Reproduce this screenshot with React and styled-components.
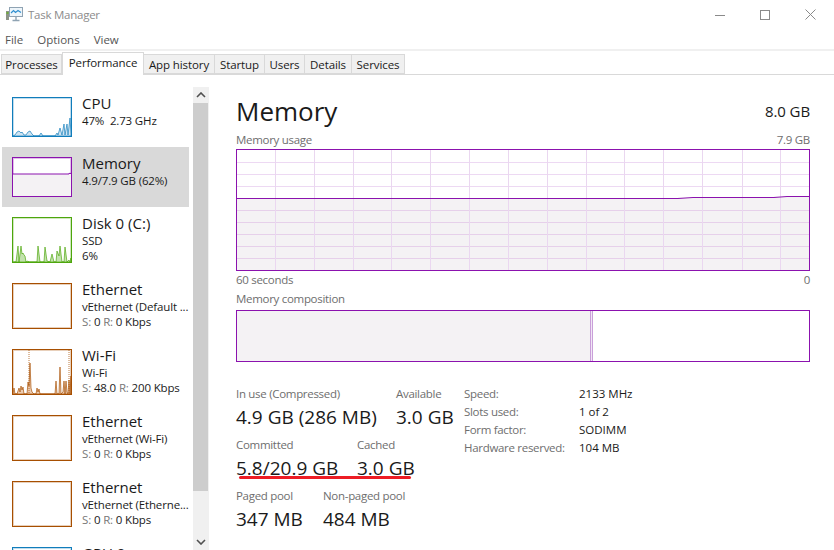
import React from 'react'
import styled, { createGlobalStyle } from 'styled-components'

const FONT = `"Open Sans", "Noto Sans", sans-serif`
const PURPLE = '#8b12ae'

const GlobalStyle = createGlobalStyle`
  html, body {
    margin: 0;
    padding: 0;
    background: #fff;
    overflow: hidden;
  }
  body {
    font-family: ${FONT};
    color: #1a1a1a;
  }
`

const TABS = ['Processes', 'Performance', 'App history', 'Startup', 'Users', 'Details', 'Services']
const TAB_WIDTHS = [61, 82, 71, 50, 40, 47, 53]

const CPU_LINE = [[0,38],[2,37],[4,34],[6,33],[8,35],[9,34],[11,37],[13,37],[15,34],[17,33],[19,36],[21,38],[26,38],[28,35],[30,38],[42,38],[44,35],[45,37],[47,30],[49,37],[51,26],[52,37],[54,26],[55,37],[57,20],[58,36]]
const DISK_LINE = [[0,44],[3,44],[5,28],[6,44],[8,28],[9,36],[10,35],[11,37],[12,38],[13,44],[15,43],[16,44],[24,44],[25,28],[27,44],[31,44],[32,29],[34,43],[37,44],[39,36],[41,44],[43,44],[44,33],[46,38],[47,28],[49,44],[51,44],[52,29],[54,44],[56,42],[57,44],[58,40]]
const WIFI_LINE = [[0,44],[1,38],[2,44],[4,44],[6,38],[7,42],[8,36],[9,40],[10,37],[11,44],[14,44],[15,32],[16,36],[17,13],[18,38],[19,42],[21,44],[23,44],[24,38],[25,42],[26,39],[27,44],[42,44],[43,31],[44,44],[46,44],[47,17],[48,44],[50,42],[51,31],[52,44],[53,31],[54,42],[55,44],[56,30],[57,44],[58,26]]
const WIFI_DOTS = [[16,0,16,44],[56,0,56,44]]

const H_LINES = [162, 174, 186, 210, 222, 234, 246, 258].map((y) => y - 149)
const V_LINES = [275, 314, 353, 391, 430, 469, 508, 547, 586, 624, 663, 702, 742, 780].map((x) => x - 236)

const ROWS = [
  { id: 'cpu', name: 'CPU', lines: ['47%  2.73 GHz'], color: '#117dbb', fill: '#cfe4f2', h: 40, points: CPU_LINE },
  { id: 'mem', name: 'Memory', lines: ['4.9/7.9 GB (62%)'], color: PURPLE, h: 40, selected: true, level: 16 },
  { id: 'disk', name: 'Disk 0 (C:)', lines: ['SSD', '6%'], color: '#4da60c', fill: '#c3e2ae', h: 46, points: DISK_LINE },
  { id: 'eth1', name: 'Ethernet', lines: ['vEthernet (Default ...'], rate: ['0', '0 Kbps'], color: '#a74f01', h: 46 },
  { id: 'wifi', name: 'Wi-Fi', lines: ['Wi-Fi'], rate: ['48.0', '200 Kbps'], color: '#a74f01', fill: '#eccbb0', h: 46, points: WIFI_LINE, dots: WIFI_DOTS },
  { id: 'eth2', name: 'Ethernet', lines: ['vEthernet (Wi-Fi)'], rate: ['0', '0 Kbps'], color: '#a74f01', h: 46 },
  { id: 'eth3', name: 'Ethernet', lines: ['vEthernet (Etherne...'], rate: ['0', '0 Kbps'], color: '#a74f01', h: 46 },
  { id: 'gpu', name: 'GPU 0', lines: ['Intel(R) UHD Graphics'], color: '#117dbb', h: 46 },
]

const SPECS = [
  ['Speed:', '2133 MHz'],
  ['Slots used:', '1 of 2'],
  ['Form factor:', 'SODIMM'],
  ['Hardware reserved:', '104 MB'],
]

const Sparkline = ({ row }) => {
  const { h, color, fill, points, dots, level } = row
  const area = points && `0,${h - 2} ${points.map((p) => p.join(',')).join(' ')} 58,${h - 2}`
  return (
    <Thumb $color={color} $height={h}>
      <svg width="58" height={h - 2} viewBox={`0 0 58 ${h - 2}`}>
        {level && <rect x="0" y={level} width="58" height={h - 2 - level} fill="#f4f2f4" />}
        {level && <path d={`M0 ${level}H56V${level - 0.6}H58`} fill="none" stroke={color} strokeWidth="1" />}
        {points && <polygon points={area} fill={fill} stroke={color} strokeWidth="0.8" strokeOpacity="0.85" />}
        {dots && dots.map((d) => (
          <line key={d[0]} x1={d[0]} y1={d[1]} x2={d[2]} y2={d[3]} stroke={color} strokeOpacity="0.75" strokeWidth="1" strokeDasharray="1 1" />
        ))}
      </svg>
    </Thumb>
  )
}

const SideRow = ({ row }) => (
  <RowBox $selected={row.selected}>
    <Sparkline row={row} />
    <RowText>
      <RowName>{row.name}</RowName>
      {row.lines.map((l) => <RowLine key={l}>{l}</RowLine>)}
      {row.rate && (
        <RowLine>
          <Dim>S:</Dim> {row.rate[0]} <Dim>R:</Dim> {row.rate[1]}
        </RowLine>
      )}
    </RowText>
  </RowBox>
)

const UsageChart = () => (
  <ChartFrame>
    <svg width="572" height="120" viewBox="0 0 572 120">
      <path d="M0 48.5H441V47.5H537V46.5H572V120H0Z" fill="#f4f2f4" />
      {H_LINES.map((y) => <rect key={y} x="0" y={y - 1} width="572" height="1" fill={y > 48 ? '#e6d0ea' : '#edd9f3'} />)}
      {V_LINES.map((x) => <rect key={x} x={x - 1} y="0" width="1" height="120" fill="#ead7f0" />)}
      <path d="M0 48.5H441L456 47.5H537L550 46.5H572" fill="none" stroke={PURPLE} strokeWidth="1" />
    </svg>
  </ChartFrame>
)

const AppIcon = () => (
  <svg width="18" height="15" viewBox="0 0 18 15">
    <rect x="1" y="4" width="3" height="9" fill="#8d9488" />
    <rect x="1.5" y="5" width="2" height="2" fill="#6fae3a" />
    <rect x="4.5" y="0.5" width="13" height="9" fill="#eef5fa" stroke="#8fa3b3" />
    <path d="M6 6l2.5-2.5 2 2 2.5-2 3 2" fill="none" stroke="#2f8fd0" strokeWidth="1.2" />
    <path d="M7.5 13.5h7M11 10v3" stroke="#8fa3b3" strokeWidth="1.4" />
  </svg>
)

const WindowControls = () => (
  <Controls>
    <svg width="10" height="10" viewBox="0 0 10 10"><path d="M0 5.5H10" stroke="#8a8a8a" /></svg>
    <svg width="10" height="10" viewBox="0 0 10 10"><rect x="0.5" y="0.5" width="9" height="9" fill="none" stroke="#8a8a8a" /></svg>
    <svg width="11" height="11" viewBox="0 0 11 11"><path d="M0.5 0.5L10.5 10.5M10.5 0.5L0.5 10.5" stroke="#8a8a8a" /></svg>
  </Controls>
)

const Stat = ({ label, value, width }) => (
  <StatBox $width={width}>
    <Caption>{label}</Caption>
    <StatValue>{value}</StatValue>
  </StatBox>
)

export default function App() {
  return (
    <Page>
      <GlobalStyle />
      <TitleBar>
        <AppIcon />
        <WindowTitle>Task Manager</WindowTitle>
        <WindowControls />
      </TitleBar>
      <MenuBar>
        <MenuItem>File</MenuItem>
        <MenuItem>Options</MenuItem>
        <MenuItem>View</MenuItem>
      </MenuBar>
      <TabStrip>
        {TABS.map((t, i) => (
          <Tab key={t} $width={TAB_WIDTHS[i]} $active={t === 'Performance'}>{t}</Tab>
        ))}
      </TabStrip>
      <Body>
        <Sidebar>
          <RowList>
            {ROWS.map((r) => <SideRow key={r.id} row={r} />)}
          </RowList>
          <ScrollBar>
            <ScrollButton>
              <svg width="10" height="6" viewBox="0 0 10 6"><path d="M1 5l4-4 4 4" fill="none" stroke="#505050" strokeWidth="1.6" /></svg>
            </ScrollButton>
            <ScrollThumb />
            <ScrollRest>
              <svg width="10" height="6" viewBox="0 0 10 6"><path d="M1 1l4 4 4-4" fill="none" stroke="#505050" strokeWidth="1.6" /></svg>
            </ScrollRest>
          </ScrollBar>
        </Sidebar>
        <Main>
          <HeadRow>
            <Heading>Memory</Heading>
            <Total>8.0 GB</Total>
          </HeadRow>
          <LabelRow>
            <Caption>Memory usage</Caption>
            <Caption>7.9 GB</Caption>
          </LabelRow>
          <UsageChart />
          <LabelRow>
            <Caption>60 seconds</Caption>
            <Caption>0</Caption>
          </LabelRow>
          <CompositionLabel>Memory composition</CompositionLabel>
          <CompositionBar>
            <InUse />
            <Modified />
          </CompositionBar>
          <Stats>
            <StatColumn>
              <StatRow>
                <Stat label="In use (Compressed)" value="4.9 GB (286 MB)" width={160} />
                <Stat label="Available" value="3.0 GB" />
              </StatRow>
              <StatRow>
                <Stat label="Committed" value="5.8/20.9 GB" width={121} />
                <Stat label="Cached" value="3.0 GB" />
                <RedMark />
              </StatRow>
              <StatRow>
                <Stat label="Paged pool" value="347 MB" width={87} />
                <Stat label="Non-paged pool" value="484 MB" />
              </StatRow>
            </StatColumn>
            <SpecGrid>
              {SPECS.map(([k, v]) => (
                <React.Fragment key={k}>
                  <Caption>{k}</Caption>
                  <SpecValue>{v}</SpecValue>
                </React.Fragment>
              ))}
            </SpecGrid>
          </Stats>
        </Main>
      </Body>
    </Page>
  )
}

const Page = styled.div`
  width: 834px;
  height: 550px;
  overflow: hidden;
  display: flex;
  flex-direction: column;
  background: #fff;
`

const TitleBar = styled.div`
  height: 29px;
  padding-bottom: 1px;
  display: flex;
  align-items: center;
  padding-left: 5px;
  flex: none;
`

const WindowTitle = styled.span`
  margin-left: 5px;
  font-size: 11.5px;
  letter-spacing: -0.25px;
  color: #8c8c8c;
`

const Controls = styled.div`
  margin-left: auto;
  margin-right: 18px;
  display: flex;
  align-items: center;
  gap: 35px;
`

const MenuBar = styled.div`
  height: 19px;
  flex: none;
  display: flex;
  align-items: center;
  gap: 14px;
  padding-left: 5px;
  border-bottom: 2px solid #f0f0f0;
`

const MenuItem = styled.span`
  font-size: 11.5px;
  color: #555;
`

const TabStrip = styled.div`
  height: 23px;
  flex: none;
  display: flex;
  align-items: flex-end;
  padding-left: 1px;
  border-bottom: 1px solid #d9d9d9;
`

const Tab = styled.div`
  width: ${(p) => p.$width}px;
  box-sizing: border-box;
  height: ${(p) => (p.$active ? 23 : 20)}px;
  margin-bottom: ${(p) => (p.$active ? -1 : 0)}px;
  display: flex;
  align-items: center;
  justify-content: center;
  font-size: 11.5px;
  letter-spacing: -0.1px;
  white-space: nowrap;
  color: #1a1a1a;
  background: ${(p) => (p.$active ? '#fff' : '#f0f0f0')};
  border: 1px solid #d9d9d9;
  border-left-width: ${(p) => (p.$active ? 1 : 0)}px;
  border-bottom-width: ${(p) => (p.$active ? 0 : 1)}px;
  padding-bottom: ${(p) => (p.$active ? 3 : 0)}px;
  &:first-child {
    border-left-width: 1px;
  }
`

const Body = styled.div`
  flex: 1;
  min-height: 0;
  display: flex;
`

const Sidebar = styled.div`
  width: 209px;
  flex: none;
  display: flex;
  padding-top: 12px;
  box-sizing: border-box;
`

const RowList = styled.div`
  width: 193px;
  flex: none;
  overflow: hidden;
`

const RowBox = styled.div`
  width: 187px;
  margin-left: 2px;
  box-sizing: border-box;
  padding: 10px 0 10px 10px;
  display: flex;
  gap: 10px;
  overflow: hidden;
  white-space: nowrap;
  background: ${(p) => (p.$selected ? '#d9d9d9' : 'transparent')};
`

const Thumb = styled.div`
  width: 60px;
  height: ${(p) => p.$height}px;
  flex: none;
  box-sizing: border-box;
  border: 1px solid ${(p) => p.$color};
  box-shadow: inset 0 0 0 1px ${(p) => p.$color}44;
  background: #fff;
  svg {
    display: block;
  }
`

const RowText = styled.div`
  margin-top: -4px;
  min-width: 0;
`

const RowName = styled.div`
  font-size: 15px;
  line-height: 20px;
`

const RowLine = styled.div`
  font-size: 11.5px;
  letter-spacing: -0.15px;
  line-height: 15px;
  white-space: pre;
`

const Dim = styled.span`
  color: #777;
`

const ScrollBar = styled.div`
  width: 16px;
  flex: none;
  display: flex;
  flex-direction: column;
  background: #f0f0f0;
`

const ScrollButton = styled.div`
  height: 16px;
  flex: none;
  display: flex;
  align-items: center;
  justify-content: center;
`

const ScrollThumb = styled.div`
  height: 388px;
  flex: none;
  width: 15px;
  background: #cdcdcd;
`

const ScrollRest = styled.div`
  flex: 1;
  display: flex;
  align-items: flex-end;
  justify-content: center;
  padding-bottom: 5px;
`

const Main = styled.div`
  flex: 1;
  min-width: 0;
  display: flex;
  flex-direction: column;
  padding: 17px 24px 0 27px;
`

const HeadRow = styled.div`
  display: flex;
  align-items: center;
  justify-content: space-between;
  height: 38px;
  margin-bottom: 1px;
  flex: none;
`

const Heading = styled.div`
  font-size: 26px;
  line-height: 38px;
`

const Total = styled.div`
  font-size: 15px;
  letter-spacing: -0.1px;
`

const Caption = styled.div`
  font-size: 11.5px;
  letter-spacing: -0.3px;
  line-height: 14px;
  color: #6e6e6e;
  white-space: nowrap;
`

const LabelRow = styled.div`
  display: flex;
  justify-content: space-between;
  margin: 2px 0;
  flex: none;
`

const ChartFrame = styled.div`
  box-sizing: border-box;
  height: 122px;
  flex: none;
  border: 1px solid ${PURPLE};
  svg {
    display: block;
  }
`

const CompositionLabel = styled(Caption)`
  margin: 3px 0 4px;
  flex: none;
`

const CompositionBar = styled.div`
  box-sizing: border-box;
  height: 52px;
  flex: none;
  border: 1px solid ${PURPLE};
  display: flex;
`

const InUse = styled.div`
  width: 353px;
  background: #f4f2f4;
`

const Modified = styled.div`
  width: 3px;
  box-sizing: border-box;
  background: #f1e6f5;
  border-left: 1px solid #c99fd9;
  border-right: 1px solid #c99fd9;
`

const Stats = styled.div`
  display: flex;
  flex: none;
  margin-top: 25px;
`

const StatColumn = styled.div`
  width: 228px;
  flex: none;
  display: flex;
  flex-direction: column;
  gap: 9px;
`

const StatRow = styled.div`
  position: relative;
  display: flex;
`

const StatBox = styled.div`
  ${(p) => p.$width && `width: ${p.$width}px; flex: none;`}
`

const StatValue = styled.div`
  margin-top: 4px;
  font-size: 19px;
  line-height: 24px;
  white-space: nowrap;
`

const RedMark = styled.div`
  position: absolute;
  left: 3px;
  top: 38px;
  width: 172px;
  height: 3px;
  border-radius: 2px;
  background: #ed1c24;
`

const SpecGrid = styled.div`
  display: grid;
  grid-template-columns: 115px auto;
  grid-auto-rows: 18px;
  align-items: center;
  margin-top: -2px;
  align-self: flex-start;
`

const SpecValue = styled.div`
  font-size: 11.5px;
  line-height: 14px;
  white-space: nowrap;
`
